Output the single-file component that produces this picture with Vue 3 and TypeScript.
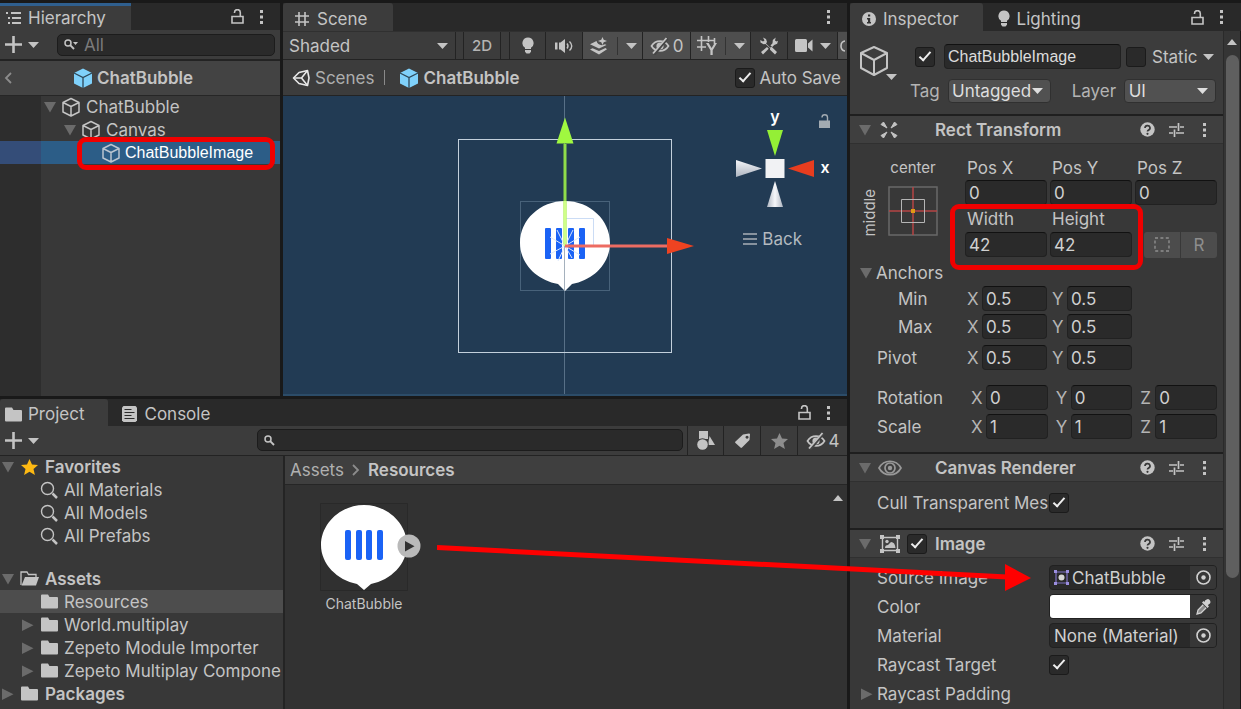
<script setup lang="ts">
import { h, ref, type FunctionalComponent } from 'vue'

type Glyph = [width: number, height: number, markup: string]

const cubeLines = '<path d="M10 1.5 18 5.5V15l-8 4-8-4V5.5Z M2 5.5l8 4 8-4 M10 9.5V19" fill="none" stroke="currentColor" stroke-width="1.5" stroke-linejoin="round"/>'
const eyeOff = '<path d="M1.5 9c4-6.500 13-6.500 17 0c-4 6.500-13 6.500-17 0Z" fill="none" stroke="currentColor" stroke-width="1.700"/><circle cx="10" cy="9" r="3.600" fill="currentColor"/><path d="M4 17.500 17.500 1" stroke="#444" stroke-width="3"/><path d="M3 16.500 16.500 1" stroke="currentColor" stroke-width="1.800"/>'

const glyphs: Record<string, Glyph> = {
  hierarchy: [15, 12, '<path d="M0 0h2v2H0zM2 5h2v2H2zM2 10h2v2H2zM5 0h10v2H5zM6 5h9v2H6zM6 10h9v2H6z" fill="currentColor"/>'],
  hash: [16, 16, '<path d="M5 1v14M11 1v14M1 5h14M1 11h14" fill="none" stroke="currentColor" stroke-width="1.600"/>'],
  info: [14, 14, '<circle cx="7" cy="7" r="7" fill="currentColor"/><path d="M6 2.500h2.200v2H6zM5 6h3.200v4H9v1.400H5V10h1V7.400H5z" fill="#333"/>'],
  bulb: [12, 17, '<path d="M6 .5a5.600 5.600 0 0 0-3 10.300V12h6v-1.200A5.600 5.600 0 0 0 6 .5ZM3 13h6v1.800l-1.500 1.700h-3L3 14.800z" fill="currentColor"/>'],
  lock: [13, 15, '<path d="M1 7.500h11v6.500H1z" fill="none" stroke="currentColor" stroke-width="1.600"/><path d="M3.500 4V3.500a2.800 2.800 0 0 1 5.800 0v4" fill="none" stroke="currentColor" stroke-width="1.600"/>'],
  dots: [5, 16, '<path d="M1 1h3v3H1zM1 6.500h3v3H1zM1 12h3v3H1z" fill="currentColor"/>'],
  plus: [17, 17, '<path d="M7.200 0h2.600v7.200H17v2.600H9.800V17H7.200V9.800H0V7.200h7.200z" fill="currentColor"/>'],
  caret: [11, 6, '<path d="M0 0h11L5.500 6z" fill="currentColor"/>'],
  up: [10, 6, '<path d="M0 6h10L5 0z" fill="currentColor"/>'],
  fold: [12, 12, '<path d="M0 1h12L6 11.500z" fill="#6b6b6b"/>'],
  unfold: [12, 12, '<path d="M0 .5v11.500L11.500 6.200z" fill="#6b6b6b"/>'],
  cube: [20, 20, cubeLines],
  bigCube: [30, 32, '<path d="M15 2 28 8v15l-13 7-13-7V8Z M2 8l13 7 13-7 M15 15v15" fill="none" stroke="currentColor" stroke-width="2" stroke-linejoin="round"/>'],
  prefab: [20, 20, '<path d="M10 .5 19 5v10.500L10 20l-9-4.500V5Z" fill="#7fd1fb"/><path d="M1 5l9 4.500L19 5M10 9.500V20" fill="none" stroke="#2d4656" stroke-width="1.300"/>'],
  back: [8, 12, '<path d="M7 1 2 6l5 5" fill="none" stroke="#8c8c8c" stroke-width="1.800"/>'],
  chevron: [8, 12, '<path d="M1 1l5 5-5 5" fill="none" stroke="#8c8c8c" stroke-width="1.800"/>'],
  search: [11, 11, '<circle cx="4" cy="4" r="3" fill="none" stroke="currentColor" stroke-width="1.500"/><path d="M6.200 6.200 10 10" stroke="currentColor" stroke-width="1.900"/>'],
  searchMenu: [14, 11, '<circle cx="4" cy="4" r="3" fill="none" stroke="currentColor" stroke-width="1.500"/><path d="M6.200 6.200 10 10" stroke="currentColor" stroke-width="1.900"/><path d="M9 3h5l-2.500 3z" fill="currentColor"/>'],
  query: [18, 18, '<circle cx="7.500" cy="7.500" r="6" fill="none" stroke="currentColor" stroke-width="1.400"/><path d="M12.500 12.500 17 17" stroke="currentColor" stroke-width="2.500"/>'],
  sound: [19, 14, '<path d="M0 3.500h2.500v7H0zM4 3.500h1.500L10 0v14l-4.500-3.500H4z" fill="currentColor"/><path d="M12 4.500q2 2.500 0 5M14.500 2.500q4.500 4.500 0 9" fill="none" stroke="currentColor" stroke-width="1.400"/>'],
  effects: [20, 18, '<path d="M1 7.200 7.500 4q1 4 5.500 4.200l3-1 1.500.8L10 11.500z" fill="currentColor"/><path d="M1 12.500l2.500-1.300L10 14l6.500-3 1.500 1.200L10 17.500z" fill="currentColor"/><path d="M13.500 0l1.200 2.800L18 4l-3.300 1.200L13.500 8l-1.200-2.800L9 4l3.300-1.200z" fill="currentColor"/>'],
  eyeOff: [20, 18, eyeOff],
  gridY: [20, 19, '<path d="M4.500 0v15M11.500 0v6M0 4.500h18M0 11h9M17.500 2v6" fill="none" stroke="currentColor" stroke-width="1.600"/><path d="M9 7h2.600l3 5 3-5H20l-4.300 7.300V19h-2.300v-4.700z" fill="currentColor"/>'],
  tools: [18, 18, '<path d="M3 .5l3 1.500 1 3-1 1.500 4 4 1.800-.5L17 15l-2 2.500-5-4.700.2-1.500L5.500 7l-2 .2L.5 5.500.3 3l2.700 1.500L4.500 3.500z" fill="currentColor"/><path d="M1 15l6-5 1.700 1.700L3 17.500z M10.500 8.500l2-2.200.3-3.300L15.700.5l-.7 3 1.500 1 1.500-.7-.8 3-3 1.200-2 2z" fill="currentColor"/>'],
  camera: [18, 13, '<path d="M1.500 0h9A1.500 1.500 0 0 1 12 1.500v10a1.500 1.500 0 0 1-1.500 1.500h-9A1.500 1.500 0 0 1 0 11.500v-10A1.500 1.500 0 0 1 1.500 0ZM13 4.500 17.500.5v12L13 8.500z" fill="currentColor"/>'],
  arc: [5, 12, '<path d="M6 1Q1 1 1 6t5 5" fill="none" stroke="currentColor" stroke-width="1.600"/>'],
  unity: [18, 18, '<path d="M1.500 9 7 3.500l8.500-2L17 9l-1.500 7.500L7 14.500z" fill="none" stroke="#e8e8e8" stroke-width="1.600" stroke-linejoin="round"/><path d="M2 9h7.500l6-7.500M9.500 9l6 7.500" fill="none" stroke="#e8e8e8" stroke-width="1.600"/>'],
  folder: [17, 15, '<path d="M0 1.500Q0 .5 1 .5h6L8.500 3H16q1 0 1 1v9.500q0 1-1 1H1q-1 0-1-1z" fill="currentColor"/>'],
  folderOpen: [19, 15, '<path d="M1 14V1h6l1.500 2.500H16V6" fill="none" stroke="currentColor" stroke-width="1.300"/><path d="M5 6h14l-3 8.500H1.500z" fill="currentColor"/>'],
  console: [15, 16, '<path d="M1.500 0h12L15 1.500v13l-1.500 1.500h-12L0 14.500v-13z" fill="currentColor"/><path d="M2.500 3.500h7M2.500 6.500h10M2.500 9.500h7M2.500 12.500h10" stroke="#2b2b2b" stroke-width="1.200"/>'],
  favorite: [17, 16, '<path d="M8.500 0l2.500 5.500 6 .5-4.500 4 1.400 6-5.400-3.200L3.100 16l1.400-6L0 6l6-.5z" fill="#fdb913"/>'],
  star: [17, 16, '<path d="M8.500 0l2.500 5.500 6 .5-4.500 4 1.400 6-5.400-3.200L3.100 16l1.400-6L0 6l6-.5z" fill="#8d8d8d"/>'],
  shapes: [18, 19, '<path d="M2 0h9v8H2z" fill="currentColor"/><path d="M12.500 5 18 14h-7z" fill="currentColor"/><circle cx="5.500" cy="13.500" r="6.200" fill="#3c3c3c"/><circle cx="5.500" cy="13.500" r="5.300" fill="currentColor"/>'],
  tag: [15, 15, '<path fill-rule="evenodd" d="M8 1.500 14 .5q1 0 1 1L14.500 7 7 14.500q-.8.800-1.500 0L.5 10q-.8-.8 0-1.500zM12 2.700a1.500 1.500 0 1 0 .1 0z" fill="currentColor"/>'],
  play: [24, 24, '<circle cx="12" cy="12" r="11.500" fill="#b9b9b9"/><path d="M8 7v10.500l9.500-5.200z" fill="#303030"/>'],
  help: [15, 15, '<circle cx="7.500" cy="7.500" r="7.200" fill="currentColor"/><path d="M5 6a2.500 2.300 0 1 1 3.500 2.100Q7.500 8.500 7.500 9.600" fill="none" stroke="#383838" stroke-width="1.700"/><circle cx="7.500" cy="11.800" r="1.100" fill="#383838"/>'],
  sliders: [15, 14, '<path d="M0 4h8M11 4h4M9.500 0v8M0 10h4M7 10h8M5.500 6.500v7.500" fill="none" stroke="currentColor" stroke-width="1.700"/>'],
  rect: [18, 18, '<path d="M1 3.500 3.500 1 7 7zM17 3.500 14.500 1 11 7zM1 14.500 3.500 17 7 11zM17 14.500 14.500 17 11 11z" fill="currentColor" stroke="currentColor" stroke-linejoin="round"/>'],
  eye: [24, 18, '<path d="M1 9c5-9 17-9 22 0c-5 9-17 9-22 0Z" fill="none" stroke="#989898" stroke-width="1.700"/><circle cx="12" cy="9" r="5" fill="none" stroke="#989898" stroke-width="1.700"/><circle cx="12" cy="9" r="2.200" fill="#989898"/>'],
  picture: [20, 18, '<path d="M2.500 2.500h15v13h-15z" fill="none" stroke="currentColor" stroke-width="1.400"/><path d="M0 0h4v4H0zM16 0h4v4h-4zM0 14h4v4H0zM16 14h4v4h-4z" fill="currentColor"/><path d="M5 13q0-3 3-3l3-3q4 0 4.500 6z" fill="currentColor"/><circle cx="7" cy="6.500" r="1.700" fill="currentColor"/>'],
  sprite: [15, 15, '<path d="M2 2h11v11H2z" fill="none" stroke="#7f72c4" stroke-width="1.200"/><path d="M0 0h3v3H0zM12 0h3v3h-3zM0 12h3v3H0zM12 12h3v3h-3z" fill="#9b8ee0"/><circle cx="7.500" cy="7.500" r="3" fill="#d6d6d6"/>'],
  target: [15, 15, '<circle cx="7.500" cy="7.500" r="6.500" fill="none" stroke="currentColor" stroke-width="1.600"/><circle cx="7.500" cy="7.500" r="2.200" fill="currentColor"/>'],
  dropper: [15, 16, '<path d="M9 1.500q3.500-3 5 0t-1.500 4L12 6.500l1 1-1.500 1.500L6 3.500 7.500 2l1 1z" fill="currentColor"/><path d="M7.200 5.800 2 11l-1 4 4-1 5.200-5.200" fill="#8a8a8a" stroke="currentColor" stroke-width="1.300"/>'],
  dashed: [16, 15, '<path d="M1 1h14v13H1z" fill="none" stroke="#8e8e8e" stroke-width="1.400" stroke-dasharray="3 2.400"/>'],
  burger: [14, 12, '<path d="M0 1h14M0 6h14M0 11h14" stroke="#a9b0b7" stroke-width="1.400"/>'],
  solidLock: [11, 14, '<path d="M0 6.500h11V14H0z" fill="#a3abb2"/><path d="M3 3.500a2.700 2.700 0 0 1 5.500 0v3.500" fill="none" stroke="#a3abb2" stroke-width="1.400"/>'],
}

const Icon: FunctionalComponent<{ name: string }> = ({ name }) => {
  const [width, height, innerHTML] = glyphs[name]
  return h('svg', { width, height, viewBox: `0 0 ${width} ${height}`, innerHTML, 'aria-hidden': 'true', class: 'icon' })
}
Icon.props = ['name']

const favorites = ['All Materials', 'All Models', 'All Prefabs']
const folders = [
  { name: 'Resources', nested: false },
  { name: 'World.multiplay', nested: true },
  { name: 'Zepeto Module Importer', nested: true },
  { name: 'Zepeto Multiplay Compone', nested: true },
]
const selectedFolder = ref('Resources')

const anchorRows = [
  { label: 'Min', indent: true, values: { X: '0.5', Y: '0.5' } },
  { label: 'Max', indent: true, values: { X: '0.5', Y: '0.5' } },
  { label: 'Pivot', indent: false, values: { X: '0.5', Y: '0.5' } },
]
const spinRows = [
  { label: 'Rotation', values: { X: '0', Y: '0', Z: '0' } },
  { label: 'Scale', values: { X: '1', Y: '1', Z: '1' } },
]
</script>

<template>
  <div class="editor">
    <div class="workspace">
      <div class="upper">
        <section class="panel hierarchy">
          <header class="tabs">
            <button class="tab active focused"><Icon name="hierarchy" />Hierarchy</button>
            <button class="tool lock" aria-label="Lock"><Icon name="lock" /></button>
            <button class="tool" aria-label="Menu"><Icon name="dots" /></button>
          </header>
          <div class="bar">
            <button class="add" aria-label="Create"><Icon name="plus" /><Icon name="caret" /></button>
            <label class="search"><Icon name="searchMenu" /><input type="text" placeholder="All" aria-label="Search hierarchy" /></label>
          </div>
          <div class="prefab-head">
            <button class="tool back" aria-label="Back to scene"><Icon name="back" /></button>
            <Icon name="prefab" /><strong>ChatBubble</strong>
          </div>
          <ul class="tree scene-tree">
            <li class="depth-0"><Icon name="fold" /><Icon name="cube" /><span>ChatBubble</span></li>
            <li class="depth-1"><Icon name="fold" /><Icon name="cube" /><span>Canvas</span></li>
            <li class="depth-2 picked"><Icon name="cube" /><span class="plain">ChatBubbleImage</span><i class="mark tree-mark"></i></li>
          </ul>
        </section>

        <section class="panel scene">
          <header class="tabs">
            <button class="tab active"><Icon name="hash" />Scene</button>
            <button class="tool last" aria-label="Menu"><Icon name="dots" /></button>
          </header>
          <div class="scene-tools">
            <span class="drop shading"><select aria-label="Draw mode"><option>Shaded</option></select><Icon name="caret" /></span>
            <button class="cell two-d">2D</button>
            <button class="cell bulb" aria-label="Scene lighting"><Icon name="bulb" /></button>
            <button class="cell" aria-label="Audio"><Icon name="sound" /></button>
            <button class="cell wide on" aria-label="Effects"><Icon name="effects" /><i class="rule"></i><Icon name="caret" /></button>
            <button class="cell hidden-count on"><Icon name="eyeOff" />0</button>
            <button class="cell wide on" aria-label="Grid"><Icon name="gridY" /><i class="rule"></i><Icon name="caret" /></button>
            <button class="cell" aria-label="Tools"><Icon name="tools" /></button>
            <button class="cell cam" aria-label="Camera"><Icon name="camera" /><Icon name="caret" /></button>
            <button class="cell cut on" aria-label="Gizmos"><Icon name="arc" /></button>
          </div>
          <div class="crumbs">
            <a href="#"><Icon name="unity" />Scenes</a><i class="pipe"></i>
            <Icon name="prefab" /><strong>ChatBubble</strong>
            <label class="auto"><input type="checkbox" checked /><span>Auto Save</span></label>
          </div>
          <div class="viewport">
            <svg class="drawing" viewBox="0 0 564 298" preserveAspectRatio="xMidYMid slice" aria-hidden="true">
              <path d="M281.500 0v300" stroke="#587087" />
              <rect x="175.500" y="43.500" width="213" height="213" fill="none" stroke="#c3d0dc" />
              <rect x="237.500" y="105.500" width="89" height="89" fill="none" stroke="#48627a" />
              <path d="M282 105C257 105 237 124 237 147C237 167 253 184 275 188L282 195L289 188C311 184 327 167 327 147C327 124 307 105 282 105Z" fill="#fff" />
              <g fill="#1b63f5">
                <rect x="262" y="132" width="6" height="31" rx="1" /><rect x="273" y="132" width="6" height="31" rx="1" />
                <rect x="285" y="132" width="6" height="31" rx="1" /><rect x="296" y="132" width="6" height="31" rx="1" />
              </g>
              <path d="M282 150l-15-9M282 150l-8-16M282 150l8-16M282 150l15-9M282 150l-15 8M282 150l-7 15M282 150l7 12M282 150l15 9" fill="none" stroke="#dce8fa" stroke-width="1" />
              <path d="M282 122.500h28.500V150" fill="none" stroke="#cbdcf5" />
              <path d="M281.500 150v45" stroke="#a5b1bd" />
              <path d="M282 48v100" stroke="#8fdc4a" stroke-width="3" />
              <path d="M282 105v45" stroke="#d0ff88" stroke-width="3" />
              <path d="M282 21.500 290.500 47.500h-17z" fill="#a0f840" />
              <path d="M282 150h104" stroke="#ed6c62" stroke-width="3" />
              <path d="M384 142l27 8-27 8z" fill="#ee4321" />
            </svg>
            <svg class="gizmo" width="104" height="110" viewBox="0 0 104 110" aria-hidden="true">
              <defs>
                <linearGradient id="coneSide" x1="0" y1="0" x2="0" y2="1"><stop offset="0" stop-color="#f4f5f8" /><stop offset="1" stop-color="#aeb5c1" /></linearGradient>
                <linearGradient id="coneDown"><stop offset="0" stop-color="#aeb5c1" /><stop offset=".5" stop-color="#f6f7fa" /><stop offset="1" stop-color="#aeb5c1" /></linearGradient>
              </defs>
              <path d="M37 24h16l-8 26z" fill="#94ef36" />
              <path d="M35.500 53h19v19h-19z" fill="#f1f2f4" />
              <path d="M6 54v17l26-8.500z" fill="url(#coneSide)" />
              <path d="M84 54v17l-26-8.500z" fill="#e83d1f" />
              <path d="M45 75l8 26H37z" fill="url(#coneDown)" />
              <text x="45" y="16" text-anchor="middle">y</text>
              <text x="95" y="67" text-anchor="middle">x</text>
            </svg>
            <button class="tool view-lock" aria-label="Lock rotation"><Icon name="solidLock" /></button>
            <button class="view-name"><Icon name="burger" />Back</button>
          </div>
        </section>
      </div>

      <section class="panel project">
        <header class="tabs">
          <button class="tab active"><Icon name="folder" />Project</button>
          <button class="tab console"><Icon name="console" />Console</button>
          <button class="tool lock" aria-label="Lock"><Icon name="lock" /></button>
          <button class="tool last" aria-label="Menu"><Icon name="dots" /></button>
        </header>
        <div class="bar project-bar">
          <button class="add" aria-label="Create"><Icon name="plus" /><Icon name="caret" /></button>
          <label class="search"><Icon name="search" /><input type="text" aria-label="Search project" /></label>
          <button class="cell" aria-label="Search by type"><Icon name="shapes" /></button>
          <button class="cell" aria-label="Search by label"><Icon name="tag" /></button>
          <button class="cell" aria-label="Save search"><Icon name="star" /></button>
          <button class="cell hidden-packages"><Icon name="eyeOff" />4</button>
        </div>
        <div class="browser">
          <ul class="tree folders">
            <li class="root first"><Icon name="fold" /><Icon name="favorite" /><strong>Favorites</strong></li>
            <li v-for="item in favorites" :key="item" class="query"><Icon name="query" /><span>{{ item }}</span></li>
            <li class="root assets"><Icon name="fold" /><Icon name="folderOpen" /><strong>Assets</strong></li>
            <li v-for="item in folders" :key="item.name" class="folder" :class="{ current: selectedFolder === item.name }" @click="selectedFolder = item.name">
              <i class="twist"><Icon v-if="item.nested" name="unfold" /></i><Icon name="folder" /><span>{{ item.name }}</span>
            </li>
            <li class="root"><Icon name="unfold" /><Icon name="folder" /><strong>Packages</strong></li>
          </ul>
          <div class="files">
            <nav class="path"><a href="#">Assets</a><Icon name="chevron" /><strong>Resources</strong></nav>
            <div class="grid">
              <figure>
                <svg width="88" height="88" viewBox="0 0 88 88" role="img" aria-label="ChatBubble preview">
                  <path d="M.5.500h87v87H.500z" fill="#303030" stroke="#292929" />
                  <path d="M44 2C20 2 1 21 1 42C1 61 17 77 37 81L44 87L51 81C71 77 87 61 87 42C87 21 68 2 44 2Z" fill="#fff" />
                  <g fill="#1b63f5">
                    <rect x="25" y="27" width="6" height="30" rx="2" /><rect x="36" y="27" width="6" height="30" rx="2" />
                    <rect x="46" y="27" width="6" height="30" rx="2" /><rect x="57" y="27" width="6" height="30" rx="2" />
                  </g>
                </svg>
                <button class="expand" aria-label="Expand"><Icon name="play" /></button>
                <figcaption>ChatBubble</figcaption>
              </figure>
              <Icon name="up" class="scroll-up" />
            </div>
          </div>
        </div>
      </section>
    </div>

    <section class="panel inspector">
      <header class="tabs">
        <button class="tab active"><Icon name="info" />Inspector</button>
        <button class="tab lighting"><Icon name="bulb" />Lighting</button>
        <button class="tool lock" aria-label="Lock"><Icon name="lock" /></button>
        <button class="tool last" aria-label="Menu"><Icon name="dots" /></button>
      </header>
      <div class="scroller">
        <div class="components">
          <div class="object-head">
            <span class="object-icon"><Icon name="bigCube" /><Icon name="caret" /></span>
            <div class="name-row">
              <input type="checkbox" checked aria-label="Active" />
              <input class="field plain" type="text" value="ChatBubbleImage" aria-label="Name" />
              <label class="static"><input type="checkbox" /><span>Static</span></label>
              <Icon name="caret" />
            </div>
            <div class="tag-row">
              <label for="tag">Tag</label>
              <span class="drop boxed tag"><select id="tag"><option>Untagged</option></select><Icon name="caret" /></span>
              <label for="layer" class="layer-label">Layer</label>
              <span class="drop boxed layer"><select id="layer"><option>UI</option></select><Icon name="caret" /></span>
            </div>
          </div>

          <h2 class="component"><Icon name="fold" /><i class="kind"><Icon name="rect" /></i><span>Rect Transform</span><Icon name="help" /><Icon name="sliders" /><Icon name="dots" /></h2>
          <div class="rect-body">
            <div class="dims">
              <div class="preset">
                <span>center</span><span class="side">middle</span>
                <svg width="50" height="50" viewBox="0 0 50 50" aria-hidden="true">
                  <path d="M1 1h48v48H1z" fill="none" stroke="#686868" stroke-width="1.500" />
                  <path d="M25 1v48M1 25h48" stroke="#b54444" stroke-width="1.500" />
                  <path d="M13.500 13.500h23v23h-23z" fill="none" stroke="#b5b5b5" />
                  <path d="M23 23h4v4h-4z" fill="#e09a16" />
                </svg>
              </div>
              <label for="px">Pos X</label><label for="py">Pos Y</label><label for="pz">Pos Z</label>
              <input id="px" class="field" type="text" value="0" /><input id="py" class="field" type="text" value="0" /><input id="pz" class="field" type="text" value="0" />
              <label for="w">Width</label><label for="h">Height</label><span></span>
              <input id="w" class="field" type="text" value="42" /><input id="h" class="field" type="text" value="42" />
              <div class="modes"><button aria-label="Blueprint mode"><Icon name="dashed" /></button><button>R</button></div>
              <i class="mark size-mark"></i>
            </div>
            <div class="anchors-head"><Icon name="fold" />Anchors</div>
            <div v-for="row in anchorRows" :key="row.label" class="axes" :class="{ indent: row.indent, pivot: !row.indent }">
              <span class="row-label">{{ row.label }}</span>
              <label v-for="(value, axis) in row.values" :key="axis"><span>{{ axis }}</span><input class="field" type="text" :value="value" /></label>
            </div>
            <div v-for="row in spinRows" :key="row.label" class="axes spin">
              <span class="row-label">{{ row.label }}</span>
              <label v-for="(value, axis) in row.values" :key="axis"><span>{{ axis }}</span><input class="field" type="text" :value="value" /></label>
            </div>
          </div>

          <h2 class="component"><Icon name="fold" /><i class="kind eye-kind"><Icon name="eye" /></i><span>Canvas Renderer</span><Icon name="help" /><Icon name="sliders" /><Icon name="dots" /></h2>
          <div class="props cull">
            <div class="prop"><label for="cull">Cull Transparent Mes</label><input id="cull" type="checkbox" checked /></div>
          </div>

          <h2 class="component"><Icon name="fold" /><i class="kind"><Icon name="picture" /><input type="checkbox" checked aria-label="Image enabled" /></i><span>Image</span><Icon name="help" /><Icon name="sliders" /><Icon name="dots" /></h2>
          <div class="props">
            <div class="prop"><span>Source Image</span><button class="picker"><Icon name="sprite" /><b>ChatBubble</b><i><Icon name="target" /></i></button></div>
            <div class="prop"><span>Color</span><button class="picker" aria-label="Color"><b class="swatch"></b><i><Icon name="dropper" /></i></button></div>
            <div class="prop"><span>Material</span><button class="picker"><b>None (Material)</b><i><Icon name="target" /></i></button></div>
            <div class="prop"><label for="ray">Raycast Target</label><input id="ray" type="checkbox" checked /></div>
            <div class="prop more"><Icon name="unfold" /><span>Raycast Padding</span></div>
          </div>
        </div>
        <div class="scrollbar"><Icon name="up" /><i class="thumb"></i></div>
      </div>
    </section>

    <svg class="drag-arrow" width="594" height="48" viewBox="0 0 594 48" aria-hidden="true">
      <path d="M0 4.500 570 34" stroke="#f00" stroke-width="5" /><path d="M568 21l26 14-26 13z" fill="#f00" />
    </svg>
  </div>
</template>

<style>
html, body { margin: 0; background: #191919; }
</style>

<style scoped>
.editor {
  position: relative;
  display: grid;
  grid-template-columns: minmax(0, 1fr) 391px;
  column-gap: 2px;
  height: 100vh;
  padding: 3px 0 0;
  box-sizing: border-box;
  overflow: hidden;
  background: #191919;
  color: #c4c4c4;
  font: 17px/22px Inter, "Liberation Sans", sans-serif;
}
.editor *, .editor *::before, .editor *::after { box-sizing: border-box; }
button, input, select { font: inherit; color: inherit; margin: 0; border: 0; padding: 0; background: none; }
button { cursor: pointer; }
a { color: inherit; text-decoration: none; }
strong { font-weight: 600; }
i { font-style: normal; }
.icon { display: block; flex: none; }
.workspace { display: grid; grid-template-rows: minmax(0, 393fr) minmax(0, 310fr); row-gap: 3px; min-width: 0; }
.upper { display: grid; grid-template-columns: 280px minmax(0, 1fr); column-gap: 3px; min-height: 0; padding-right: 1px; }
.panel { display: flex; flex-direction: column; min-width: 0; min-height: 0; overflow: hidden; background: #383838; }
.project { margin-right: 1px; }

.tabs { display: flex; align-items: stretch; flex: none; height: 28px; background: #292929; }
.hierarchy .tabs, .project .tabs { height: 27px; }
.tab { display: flex; align-items: center; gap: 7px; padding: 3px 25px 0 6px; white-space: nowrap; }
.tab.active { background: #3c3c3c; border-radius: 3px 3px 0 0; }
.tab.focused { padding-top: 0; border-top: 3px solid #2f5f8e; border-radius: 0; }
.scene .tab { padding-left: 11px; }
.inspector .tab { padding-left: 12px; padding-right: 24px; }
.inspector .lighting { padding-left: 15px; }
.project .tab.active { gap: 6px; padding-left: 5px; padding-right: 24px; }
.project .console { padding-left: 14px; }
.tool { display: flex; align-items: center; justify-content: center; width: 24px; }
.tool.lock { margin-left: auto; }
.hierarchy .tabs .tool:last-child { margin-right: 7px; }
.tool.last { margin-left: auto; margin-right: 7px; }
.lock + .tool.last { margin-left: 0; }
.inspector .tool.last { margin-right: 8px; }

.bar { display: flex; align-items: center; flex: none; height: 31px; padding: 0 5px; background: #3c3c3c; border-bottom: 2px solid #232323; }
.add { display: flex; align-items: center; gap: 6px; width: 52px; flex: none; }
.search { display: flex; align-items: center; flex: 1; min-width: 0; height: 22px; padding-left: 6px; gap: 6px; background: #2a2a2a; border: 1px solid #1c1c1c; border-radius: 5px; }
.search input { flex: 1; min-width: 0; height: 20px; outline: 0; }
.search input::placeholder { color: #7b7b7b; opacity: 1; }

.prefab-head { display: flex; align-items: center; flex: none; height: 35px; gap: 4px; background: #434343; border-bottom: 1px solid #262626; }
.back { width: 16px; margin-right: 53px; }

.tree { list-style: none; margin: 0; padding: 0; }
.tree li { display: flex; align-items: center; height: 23px; white-space: nowrap; }
.scene-tree { flex: 1; background: linear-gradient(90deg, #2d2d2d 41px, #383838 41px); }
.scene-tree li { gap: 5px; position: relative; }
.depth-0 { padding-left: 44px; }
.depth-1 { padding-left: 64px; }
.tree .depth-0 { height: 22px; }
.depth-2 { padding-left: 101px; }
.scene-tree .depth-2 { gap: 4px; }
.picked { background: linear-gradient(90deg, #344d78 41px, #2c5d87 41px); color: #fff; }
.picked .icon { color: #b9c4cf; }
.plain { font-family: "Liberation Sans", Arial, sans-serif; font-size: 16px; }
.mark { position: absolute; border: 5px solid #f00000; border-radius: 9px; pointer-events: none; }
.tree-mark { inset: -4px 5px -6px 77px; }

.scene-tools { display: flex; flex: none; height: 29px; background: #3c3c3c; border-bottom: 1px solid #232323; border-top: 1px solid #303030; }
.drop { display: grid; align-items: center; }
.drop > * { grid-area: 1 / 1; }
.drop select { appearance: none; width: 100%; height: 100%; outline: 0; }
.drop option { background: #383838; }
.drop .icon { justify-self: end; pointer-events: none; }
.shading { flex: 1; margin-right: 7px; padding: 0 7px 0 6px; border-right: 1px solid #232323; }
.cell { display: flex; align-items: center; justify-content: center; flex: none; width: 37px; border-right: 1px solid #232323; }
.two-d { width: 38px; margin-right: 8px; border-left: 1px solid #232323; font-size: 15px; font-weight: 500; color: #b4b4b4; }
.cell.bulb { border-left: 1px solid #232323; }
.cell.on { background: #4e4e4e; }
.cell.wide { width: 60px; gap: 8px; }
.rule { width: 1px; height: 18px; background: #333; }
.hidden-count { width: 48px; gap: 3px; }
.cell.cam { width: 50px; gap: 7px; }
.cell.cut { width: 9px; border: 0; }

.crumbs { display: flex; align-items: center; flex: none; height: 36px; padding: 0 6px 0 9px; background: #3c3c3c; border-bottom: 1px solid #232323; }
.crumbs a { display: flex; align-items: center; gap: 5px; color: #aeaeae; }
.crumbs strong { margin-left: 4px; }
.pipe { width: 1px; height: 15px; margin: 0 14px 0 10px; background: #8a8a8a; }
.auto { display: flex; align-items: center; gap: 5px; margin-left: auto; }

input[type="checkbox"] { appearance: none; flex: none; display: grid; place-items: center; width: 20px; height: 20px; background: #2a2a2a; border: 1px solid #1b1b1b; border-radius: 3px; }
input[type="checkbox"]:checked::after { content: ""; width: 6px; height: 12px; margin-top: -4px; border: solid #eee; border-width: 0 2px 2px 0; transform: rotate(42deg); }

.viewport { position: relative; flex: 1; min-height: 0; overflow: hidden; background: #223b54; border-bottom: 2px solid #2c4c68; }
.drawing { position: absolute; inset: 0; width: 100%; height: 100%; }
.gizmo { position: absolute; top: 10px; right: 13px; }
.gizmo text { fill: #fff; font: 600 16px Inter, sans-serif; }
.view-lock { position: absolute; top: 18px; right: 11px; }
.view-name { position: absolute; top: 132px; right: 45px; display: flex; align-items: center; gap: 5px; color: #b3b9bf; }

.project-bar { height: 30px; padding-right: 0; border-bottom-width: 1px; align-items: stretch; }
.project-bar .add { width: 252px; }
.project-bar .search { margin: 3px 4px 4px 0; }
.project-bar .search + .cell { border-left: 1px solid #232323; }
.cell.hidden-packages { width: 49px; gap: 3px; border: 0; }

.browser { flex: 1; min-height: 0; display: grid; grid-template-columns: 283px minmax(0, 1fr); column-gap: 2px; background: #242424; }
.folders { background: #383838; overflow: hidden; padding-right: 3px; }
.folders .root { padding-left: 2px; gap: 6px; }
.folders .first { height: 22px; }
.folders .root .icon:nth-child(2) { width: 19px; }
.folders .root.assets { margin-top: 20px; }
.folders .query { padding-left: 40px; gap: 6px; }
.folders .folder { padding-left: 22px; gap: 6px; overflow: hidden; margin-right: -3px; }
.folders .current { background: #4d4d4d; }
.twist { width: 13px; flex: none; }
.files { display: flex; flex-direction: column; min-width: 0; background: #323232; }
.path { display: flex; align-items: center; gap: 8px; flex: none; height: 29px; padding-left: 5px; background: #3f3f3f; border-bottom: 1px solid #262626; }
.path a { color: #b0b0b0; }
.grid { position: relative; flex: 1; padding: 18px 35px; }
.grid figure { position: relative; width: 88px; margin: 0; }
.grid figure > svg { display: block; }
.grid figcaption { width: 88px; margin-top: 2px; text-align: center; font-size: 14px; }
.expand { position: absolute; top: 31px; right: -13px; }
.scroll-up { position: absolute; top: 10px; right: 4px; }

.scroller { flex: 1; min-height: 0; display: grid; grid-template-columns: minmax(0, 1fr) 17px; }
.components { min-width: 0; overflow: hidden; border-right: 1px solid #2a2a2a; }
.scrollbar { display: flex; flex-direction: column; align-items: center; gap: 10px; padding: 8px 2px 0 2px; background: #353535; border-right: 1px solid #191919; }
.thumb { width: 13px; height: 78%; border-radius: 7px; background: #5f5f5f; }

.object-head { position: relative; padding: 13px 7px 11px 60px; background: #3c3c3c; }
.object-icon { position: absolute; left: 9px; top: 14px; display: flex; align-items: flex-end; }
.object-icon .icon + .icon { margin: 0 0 -3px -3px; }
.name-row { display: flex; align-items: center; height: 25px; padding-left: 5px; gap: 5px; }
.name-row .field { flex: 1; margin-left: 4px; color: #dcdcdc; }
.name-row .icon { margin: 0 2px 0 -5px; }
.static { display: flex; align-items: center; gap: 6px; }
.static span { width: 51px; }
.tag-row { display: flex; align-items: center; height: 24px; margin-top: 10px; color: #b4b4b4; }
.tag-row .tag { flex: 104; min-width: 0; }
.tag-row .layer { flex: 91; min-width: 0; margin-left: 5px; }
.tag-row label { flex: none; min-width: 38px; }
.tag-row .layer-label { margin-left: 21px; min-width: 47px; }
.boxed { height: 24px; padding: 0 7px 0 4px; background: #515151; border: 1px solid #303030; border-radius: 4px; color: #dedede; }
.boxed.tag { padding-left: 3px; }

.field { width: 100%; min-width: 0; height: 25px; padding: 0 3px; background: #2a2a2a; border: 1px solid #212121; border-top-color: #111; border-radius: 4px; outline: 0; color: #d0d0d0; }

.component { display: flex; align-items: center; height: 30px; margin: 0; padding: 0 16px 0 9px; background: #3f3f3f; border-top: 2px solid #1f1f1f; border-bottom: 1px solid #303030; font-size: 17px; font-weight: 600; line-height: 22px; }
.component > span { flex: 1; }
.component .kind { display: flex; align-items: center; gap: 7px; width: 64px; padding-left: 9px; flex: none; }
.component .eye-kind { padding-left: 7px; }
.component > span ~ .icon { margin-left: 14px; }
.component > .icon:last-child { margin-left: 18px; }

.rect-body { padding: 12px 6px 13px 0; }
.dims { position: relative; display: grid; grid-template-columns: 112px repeat(3, minmax(0, 1fr)); column-gap: 3px; grid-template-rows: 24px 25px 27px 25px; align-items: center; }
.dims > label { padding-left: 2px; }
.preset { position: relative; grid-row: 1 / 5; align-self: start; display: grid; justify-items: center; width: 126px; font-size: 15px; line-height: 24px; }
.preset svg { display: block; margin-top: 6px; }
.side { position: absolute; left: 8px; top: 33px; writing-mode: vertical-rl; transform: rotate(180deg); }
.modes { display: flex; gap: 1px; padding-left: 9px; height: 26px; }
.modes button { flex: 1; display: grid; place-items: center; background: #4c4c4c; border-radius: 0 3px 3px 0; color: #8e8e8e; }
.modes button:first-child { border-radius: 3px 0 0 3px; }
.size-mark { left: 100px; right: 74px; top: 48px; height: 66px; }
.anchors-head { display: flex; align-items: center; gap: 4px; height: 24px; margin-top: 4px; padding-left: 10px; }
.axes { display: grid; grid-template-columns: 112px repeat(3, minmax(0, 1fr)); column-gap: 3px; align-items: center; margin-top: 3px; }
.axes label { display: flex; align-items: center; }
.axes label span { flex: none; width: 17px; padding-left: 2px; color: #b4b4b4; }
.anchors-head + .axes { margin-top: 1px; }
.row-label { padding-left: 27px; }
.indent .row-label { padding-left: 48px; }
.axes.pivot { margin-top: 6px; }
.spin { grid-template-columns: 113px repeat(3, minmax(0, 1fr)); column-gap: 6px; margin-top: 4px; }
.spin label span { width: 17px; }
.pivot + .spin { margin-top: 15px; }

.props { display: grid; gap: 4px; padding: 7px 6px 0 0; }
.prop { display: grid; grid-template-columns: 199px minmax(0, 1fr); align-items: center; height: 25px; }
.prop > label, .prop > span { padding-left: 27px; white-space: nowrap; }
.cull { padding: 8px 6px 13px 0; }
.picker { display: flex; align-items: center; height: 25px; padding-left: 4px; background: #2a2a2a; border: 1px solid #212121; border-radius: 4px; text-align: left; color: #d0d0d0; overflow: hidden; }
.picker b { flex: 1; font-weight: 400; white-space: nowrap; }
.picker .icon + b { margin-left: 3px; }
.picker i { display: grid; place-items: center; flex: none; width: 26px; height: 100%; background: #373737; }
.picker b.swatch { height: 23px; margin-left: -4px; background: #fff; }
.prop.more { grid-template-columns: 12px 1fr; padding-left: 11px; }
.prop.more > span { padding-left: 4px; }

.drag-arrow { position: absolute; left: 437px; top: 543px; pointer-events: none; }
</style>
